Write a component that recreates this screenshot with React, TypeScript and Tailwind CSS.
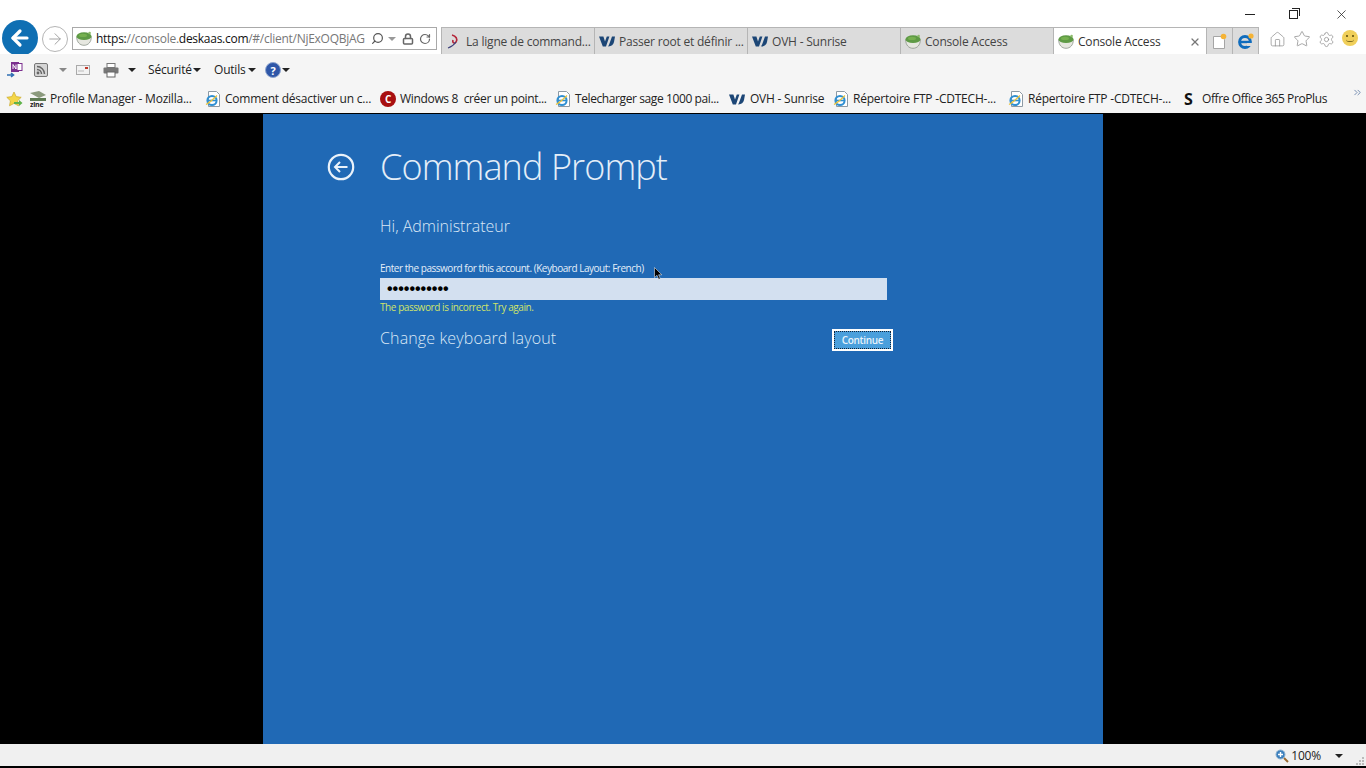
import { ArrowLeft, ArrowRight, ChevronsRight, Home, Lock, RotateCw, Search, Settings, Star, X } from 'lucide-react';

const uiFont = "font-['Open_Sans','Noto_Sans',sans-serif]";

function Caret({ className = '' }: { className?: string }) {
  return <span className={`inline-block h-0 w-0 border-x-[4px] border-t-[4px] border-x-transparent border-t-[#222] ${className}`} />;
}

function Bowl() {
  return (
    <svg width="16" height="15" viewBox="0 0 16 15" className="shrink-0">
      <path d="M0.7 6c0 5 3 8.3 7.3 8.3s7.3-3.3 7.3-8.3z" fill="#e6e7e0" stroke="#8b948a" strokeWidth="0.8" />
      <ellipse cx="8" cy="5.2" rx="7.5" ry="3.9" fill="#5e9a45" />
      <ellipse cx="7" cy="4.4" rx="4" ry="1.6" fill="#76b050" />
      <circle cx="13.6" cy="2" r="1.3" fill="#8dbb6b" />
    </svg>
  );
}

function OvhLogo() {
  return (
    <svg width="16" height="11" viewBox="0 0 16 11" className="shrink-0">
      <path d="M0 .5h4.4L6 5.5 7.8.5h2.6L7 10.5H3.8z" fill="#1c4676" />
      <path d="M9.4 10.5c-.6 0 .2-.8.8-2.2L13 .5h3l-1 5.6c-.5 2.7-2.6 4.4-5.6 4.4z" fill="#1c4676" />
    </svg>
  );
}

function IePage() {
  return (
    <svg width="16" height="16" viewBox="0 0 16 16" className="shrink-0">
      <path d="M3.5.5h8l3 3v12h-11z" fill="#fff" stroke="#8d9aa5" />
      <circle cx="7" cy="9.5" r="4.6" fill="none" stroke="#2f8fd2" strokeWidth="2" />
      <path d="M3 9.5h8" stroke="#2f8fd2" strokeWidth="1.6" />
      <path d="M1 13.5c2-1 8-6 11-9" stroke="#e8c23a" strokeWidth="1.2" fill="none" />
    </svg>
  );
}

function BrowserTab({ label, icon, active }: { label: string; icon: React.ReactNode; active?: boolean }) {
  return (
    <div className={`flex h-full w-[153px] shrink-0 items-center gap-[4px] border-r border-[#b5b5b5] pl-[4px] pt-[1px] text-[12px] tracking-[-0.2px] ${active ? 'bg-white text-[#333]' : 'bg-[#dcdcdc] text-[#444]'}`}>
      <span className="flex w-[16px] shrink-0 justify-center">{icon}</span>
      <span className="whitespace-nowrap">{label}</span>
      {active && <X size={12} strokeWidth={2.5} className="ml-auto mr-[5px] text-[#777]" />}
    </div>
  );
}

function Favorite({ label, icon, width }: { label: string; icon: React.ReactNode; width: string }) {
  return (
    <div className={`flex shrink-0 items-center gap-[4px] ${width}`}>
      {icon}
      <span className="whitespace-pre">{label}</span>
    </div>
  );
}

export default function App() {
  return (
    <div className={`flex h-[768px] w-[1366px] flex-col overflow-hidden bg-black ${uiFont}`}>
      {/* Title + tabs */}
      <div className="relative h-[54px] shrink-0 bg-white">
        <div className="flex h-[27px] items-center justify-end pt-[2px]">
          <div className="mr-[34px] h-[1px] w-[10px] bg-[#222]" />
          <div className="relative mr-[36px] h-[9px] w-[9px] border border-[#222] bg-white">
            <div className="absolute -right-[3px] -top-[3px] h-[8px] w-[8px] border-r border-t border-[#222]" />
          </div>
          <X size={15} strokeWidth={1.2} className="mr-[17px] text-[#222]" />
        </div>
        <div className="flex h-[27px] items-start">
          {/* Back / forward */}
          <div className="-mt-[1px] ml-[42px] flex h-[26px] w-[26px] shrink-0 items-center justify-center rounded-full border border-[#b5b5b5] bg-white">
            <ArrowRight size={18} strokeWidth={1.2} className="text-[#9a9a9a]" />
          </div>
          {/* Address */}
          <div className="ml-[4px] flex h-[23px] w-[365px] shrink-0 items-center border border-[#a9a9a9] pl-[3px] text-[12px] tracking-[-0.27px] text-[#777]">
            <Bowl />
            <span className="ml-[4px] mt-[1px] w-[275px] shrink-0 whitespace-nowrap">
              <span className="text-[#111]">https:</span>//console.<span className="text-[#111]">deskaas.com</span>/#/client/NjExOQBjAG
            </span>
            <Search size={13} strokeWidth={2.2} className="-scale-x-100 text-[#555]" />
            <Caret className="ml-[4px] border-t-[#999]" />
            <Lock size={12} strokeWidth={3} className="ml-[6px] text-[#666]" />
            <RotateCw size={12} strokeWidth={2.4} className="ml-[5px] text-[#666]" />
          </div>
          {/* Tabs */}
          <div className="ml-[4px] flex h-full border-l border-t border-[#b5b5b5]">
            <BrowserTab
              label="La ligne de command..."
              icon={
                <svg width="14" height="16" viewBox="0 0 14 16" className="shrink-0">
                  <path d="M5 1c4 1 6 4 4 7-1 2-4 1-3-2" fill="none" stroke="#b5263a" strokeWidth="1.6" />
                  <path d="M1 14c3-1 6-3 8-6" fill="none" stroke="#3b3f7a" strokeWidth="1.2" />
                </svg>
              }
            />
            <BrowserTab label="Passer root et définir ..." icon={<OvhLogo />} />
            <BrowserTab label="OVH - Sunrise" icon={<OvhLogo />} />
            <BrowserTab label="Console Access" icon={<Bowl />} />
            <BrowserTab label="Console Access" icon={<Bowl />} active />
            <div className="flex h-full w-[26px] items-center justify-center border-r border-[#b5b5b5] bg-[#dcdcdc]">
              <svg width="15" height="16" viewBox="0 0 15 16">
                <path d="M1.5 3.5h8l3 3v9h-11z" fill="#fff" stroke="#a5a5a5" />
                <circle cx="11.5" cy="3.5" r="2.8" fill="#f5b335" />
              </svg>
            </div>
            <div className="flex h-full w-[26px] items-center justify-center border-r border-[#b5b5b5] bg-[#dcdcdc]">
              <svg width="18" height="18" viewBox="0 0 18 18">
                <circle cx="8" cy="10" r="5.4" fill="none" stroke="#0f6cbd" strokeWidth="3" />
                <path d="M2 10h12" stroke="#0f6cbd" strokeWidth="2.4" />
                <path d="M10 14h5v-3h-5z" fill="#dcdcdc" />
                <circle cx="14" cy="4" r="2.6" fill="#f5b335" />
              </svg>
            </div>
          </div>
          {/* Right-hand tools */}
          <div className="ml-[10px] mt-[3px] flex items-center gap-[7px]">
            <Home size={17} strokeWidth={1} className="text-[#8a8a8a]" />
            <Star size={18} strokeWidth={1} className="text-[#8a8a8a]" />
            <Settings size={17} strokeWidth={1} className="text-[#8a8a8a]" />
            <div className="relative -mt-[3px] h-[16px] w-[16px] rounded-full bg-[#f0cf5a]">
              <span className="absolute left-[4px] top-[5px] h-[2px] w-[2px] bg-[#7d6a1f]" />
              <span className="absolute left-[10px] top-[5px] h-[2px] w-[2px] bg-[#7d6a1f]" />
              <span className="absolute left-[4px] top-[9px] h-[3px] w-[8px] rounded-b-full border-b border-[#7d6a1f]" />
            </div>
          </div>
        </div>
        {/* Big back button overlaps the toolbar edge */}
        <div className="absolute left-[2px] top-[20px] h-[34px] w-[36px] overflow-hidden">
          <div className="flex h-[36px] w-[36px] items-center justify-center rounded-full bg-[#0f6fb3]">
            <ArrowLeft size={24} strokeWidth={3.2} className="text-white" />
          </div>
        </div>
      </div>

      {/* Command bar */}
      <div className="flex h-[31px] shrink-0 items-center bg-[#f5f5f5] pt-[1px] text-[12px] tracking-[-0.2px] text-[#222]">
        <svg width="18" height="18" viewBox="0 0 18 18" className="ml-[6px]">
          <rect x="5" y="1" width="8" height="10" fill="#7b2f8e" />
          <rect x="11" y="2.5" width="5" height="7" fill="#fff" stroke="#7b2f8e" />
          <path d="M7 8V3.5L10 8V3.5" stroke="#fff" strokeWidth="1" fill="none" />
          <path d="M1 14h6M5 12l2.5 2-2.5 2" stroke="#2f6fb3" strokeWidth="1.6" fill="none" />
        </svg>
        <svg width="14" height="14" viewBox="0 0 14 14" className="ml-[10px]">
          <rect x="0.5" y="0.5" width="13" height="13" rx="1.5" fill="#d5d5d5" stroke="#777" />
          <circle cx="4" cy="10" r="1.4" fill="#666" />
          <path d="M3 6.5a4.5 4.5 0 0 1 4.5 4.5M3 3.5a7.5 7.5 0 0 1 7.5 7.5" stroke="#666" strokeWidth="1.4" fill="none" />
        </svg>
        <Caret className="ml-[11px] border-t-[#888]" />
        <svg width="14" height="10" viewBox="0 0 14 10" className="ml-[9px]">
          <rect x="0.5" y="0.5" width="13" height="9" fill="#f2f2f2" stroke="#aaa" />
          <rect x="9" y="2" width="3" height="2" fill="#c0392b" />
          <path d="M2 6h6" stroke="#bbb" />
        </svg>
        <svg width="16" height="15" viewBox="0 0 16 15" className="ml-[13px]">
          <rect x="4" y="0.5" width="8" height="4" fill="#fff" stroke="#777" />
          <rect x="0.5" y="4.5" width="15" height="6" rx="1" fill="#777" />
          <rect x="4" y="9" width="8" height="5" fill="#fff" stroke="#666" />
        </svg>
        <Caret className="ml-[9px]" />
        <span className="ml-[12px] w-[45px] shrink-0">Sécurité</span>
        <Caret />
        <span className="ml-[13px] w-[34px] shrink-0">Outils</span>
        <Caret />
        <div className="ml-[9px] flex h-[16px] w-[16px] items-center justify-center rounded-full border border-[#8fa6d0] bg-[#2f57a8] text-[11px] font-bold leading-none text-white">?</div>
        <Caret className="ml-[1px]" />
      </div>

      {/* Favorites bar */}
      <div className="relative flex h-[28px] shrink-0 items-center bg-[#f5f5f5] text-[12px] tracking-[-0.22px] text-[#222]">
        <svg width="17" height="16" viewBox="0 0 17 16" className="ml-[6px] shrink-0">
          <path d="M8 1l2.2 4.6 5 .7-3.6 3.5.9 5L8 12.4 3.5 14.8l.9-5L.8 6.3l5-.7z" fill="#f4d648" stroke="#c9a92c" strokeWidth="0.7" />
          <path d="M8 11h5V9l3.5 3L13 15v-2H8z" fill="#5fb34a" />
        </svg>
        <Favorite
          width="ml-[7px] w-[175px]"
          label="Profile Manager - Mozilla..."
          icon={
            <svg width="16" height="18" viewBox="0 0 16 18" className="shrink-0">
              <path d="M0 3l9-2 7 4-7 3z" fill="#8b9a7d" />
              <path d="M0 8h16v3H0z" fill="#5d7a52" />
              <text x="0" y="17" fontSize="7" fontWeight="700" fill="#222">zine</text>
            </svg>
          }
        />
        <Favorite width="w-[175px]" label="Comment désactiver un c..." icon={<IePage />} />
        <Favorite
          width="w-[175px] tracking-[-0.33px]"
          label="Windows 8  créer un point..."
          icon={
            <div className="flex h-[16px] w-[16px] shrink-0 items-center justify-center rounded-full bg-[#a80f10] text-[10px] font-bold text-white">C</div>
          }
        />
        <Favorite width="w-[174px] tracking-[-0.4px]" label="Telecharger sage 1000 pai..." icon={<IePage />} />
        <Favorite width="gap-[5px] w-[104px]" label="OVH - Sunrise" icon={<OvhLogo />} />
        <Favorite width="w-[175px]" label="Répertoire FTP -CDTECH-..." icon={<IePage />} />
        <Favorite width="w-[176px]" label="Répertoire FTP -CDTECH-..." icon={<IePage />} />
        <Favorite width="gap-[7px] tracking-[-0.4px]" label="Offre Office 365 ProPlus" icon={<span className="w-[11px] text-[16px] font-bold leading-none text-[#111]">S</span>} />
        <ChevronsRight size={11} strokeWidth={1.6} className="absolute right-[3px] top-[2px] text-[#4a6a9a]" />
      </div>

      {/* Console area */}
      <div className="flex h-[631px] shrink-0 justify-center border-t border-black bg-black">
        <div className="relative h-full w-[840px] bg-[#2069b5] pl-[117px] pt-[30px] text-white">
          <div className="flex items-center">
            <svg width="28" height="28" viewBox="0 0 28 28" className="-ml-[53px] mr-[25px] text-[#eaf2fa]">
              <circle cx="14" cy="14" r="12.2" fill="none" stroke="currentColor" strokeWidth="2.2" />
              <path d="M20.5 14H8M13 9l-5 5 5 5" fill="none" stroke="currentColor" strokeWidth="2" />
            </svg>
            <h1 className="text-[36px] font-light leading-[46px] tracking-[-0.9px] text-[#e4eef8]">Command Prompt</h1>
          </div>
          <p className="mt-[24px] text-[16px] font-light leading-[24px] text-[#dbe8f5]">Hi, Administrateur</p>
          <p className="mt-[23px] text-[10px] leading-[14px] tracking-[-0.47px] text-[#e4eef8]">Enter the password for this account. (Keyboard Layout: French)</p>
          <div className="mt-[3px] flex h-[22px] w-[507px] items-center bg-[#d3e0f0] pl-[7px] font-['Liberation_Sans',sans-serif] text-[16px] font-bold text-black">
            •••••••••••
          </div>
          <p className="text-[10px] leading-[15px] tracking-[-0.43px] text-[#cfe46a]">The password is incorrect. Try again.</p>
          <div className="mt-[11px] flex w-[513px] items-start justify-between">
            <p className="text-[16px] font-light leading-[24px] tracking-[0.13px] text-[#dbe8f5]">Change keyboard layout</p>
            <button className="mt-[3px] flex h-[22px] w-[61px] items-center justify-center border-2 border-white bg-[#4a9fdc] text-[10px] font-semibold tracking-[-0.3px] text-[#e8f3fb] outline-1 -outline-offset-3 outline-dotted outline-[#10223a]">
              Continue
            </button>
          </div>
          {/* mouse pointer */}
          <svg width="9" height="13" viewBox="0 0 9 13" className="absolute left-[391px] top-[153px]">
            <path d="M0.5 0.5v10l2.5-2.2 1.7 4 1.6-.7-1.7-3.8h3.2z" fill="#000" stroke="#fff" strokeWidth="0.5" />
          </svg>
        </div>
      </div>

      {/* Status bar */}
      <div className="relative flex h-[22px] shrink-0 items-center justify-end bg-[#f0f0f0] pt-[1px] text-[12px] tracking-[-0.2px] text-[#222]">
        <svg width="14" height="14" viewBox="0 0 14 14" className="mr-[2px]">
          <circle cx="5.5" cy="5.5" r="4.5" fill="#3d80bd" stroke="#8ab0d0" />
          <path d="M3 5.5h5M5.5 3v5" stroke="#fff" strokeWidth="1.4" />
          <path d="M9 9l4 4" stroke="#9a6a30" strokeWidth="2" />
        </svg>
        <span>100%</span>
        <Caret className="ml-[14px] mr-[23px]" />
        <div className="absolute bottom-[1px] right-[2px] grid grid-cols-3 gap-[1px]">
          <span className="col-start-3 h-[2px] w-[2px] bg-[#bbb]" />
          <span className="col-start-2 h-[2px] w-[2px] bg-[#bbb]" />
          <span className="h-[2px] w-[2px] bg-[#bbb]" />
          <span className="h-[2px] w-[2px] bg-[#bbb]" />
          <span className="h-[2px] w-[2px] bg-[#bbb]" />
          <span className="h-[2px] w-[2px] bg-[#bbb]" />
        </div>
      </div>
    </div>
  );
}
